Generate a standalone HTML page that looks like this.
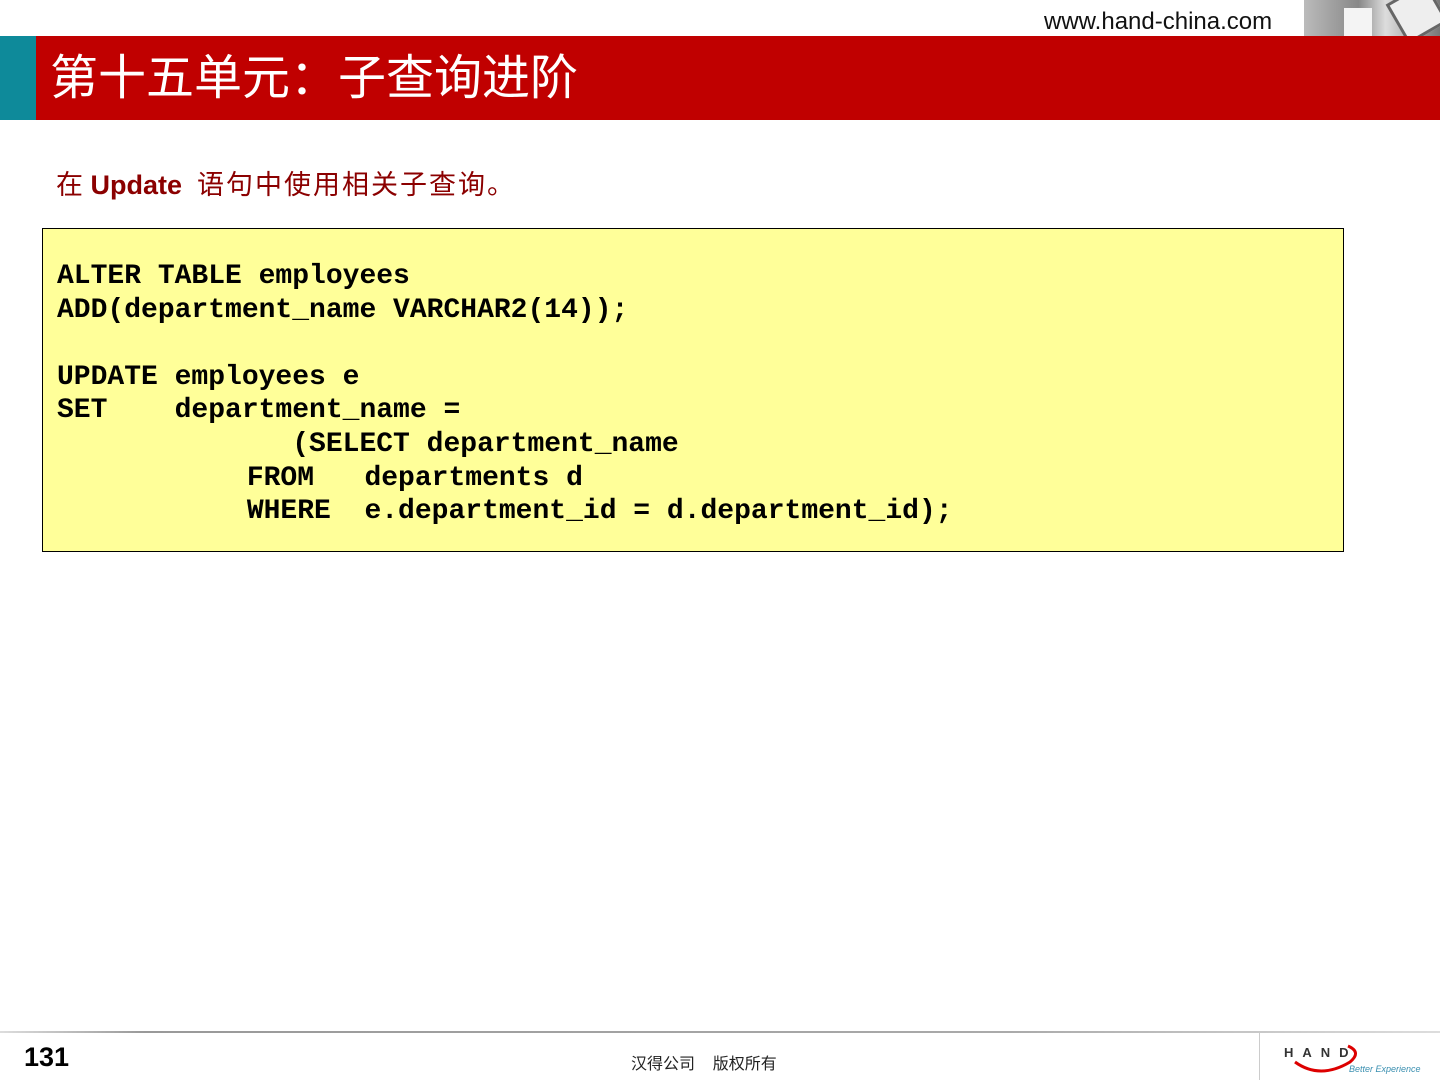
<!DOCTYPE html>
<html><head><meta charset="utf-8"><style>
body{margin:0;width:1440px;height:1080px;position:relative;background:#fff;overflow:hidden;font-family:"Liberation Sans","WenQuanYi Zen Hei",sans-serif}
.url{position:absolute;left:1044px;top:8px;font-size:24px;color:#111}
.photo{position:absolute;left:1304px;top:0;width:136px;height:36px;background:linear-gradient(90deg,#bbb,#888 40%,#ddd 60%,#777);overflow:hidden}
.bar{position:absolute;left:36px;top:36px;width:1404px;height:84px;background:#c00000}
.teal{position:absolute;left:0;top:36px;width:36px;height:84px;background:#0e8a9a}
.title{position:absolute;left:50px;top:38px;font-size:48px;color:#fff;font-family:"WenQuanYi Zen Hei",sans-serif;white-space:nowrap}
.sub{position:absolute;left:56px;top:163px;font-size:27px;color:#8b0000;font-family:"Liberation Sans","WenQuanYi Zen Hei",sans-serif;white-space:nowrap}
.sub .cj{letter-spacing:2px}
.code{position:absolute;left:42px;top:228px;width:1300px;height:322px;background:#ffff99;border:1.5px solid #000}
pre{margin:0;position:absolute;left:14px;top:31px;font-family:"Liberation Mono",monospace;font-weight:bold;font-size:28px;line-height:33.6px;color:#000}
.fline{position:absolute;left:0;top:1031px;width:1440px;height:2px;background:linear-gradient(90deg,#ddd,#999 10%,#aaa 70%,#ddd)}
.num{position:absolute;left:24px;top:1042px;font-size:27px;font-weight:bold}
.copy{position:absolute;left:631px;top:1050px;font-size:16px;color:#222;font-family:"WenQuanYi Zen Hei",sans-serif}
.vsep{position:absolute;left:1259px;top:1033px;width:1px;height:47px;background:#ccc}
</style></head><body>
<div class="url">www.hand-china.com</div>
<div class="photo"><div style="position:absolute;left:90px;top:-10px;width:40px;height:40px;background:#eee;transform:rotate(-30deg);border:3px solid #666"></div><div style="position:absolute;left:40px;top:8px;width:28px;height:28px;background:#f4f4f4"></div></div>
<div class="teal"></div><div class="bar"></div>
<div class="title">第十五单元：子查询进阶</div>
<div class="sub">在 <b style="font-family:'Liberation Sans',sans-serif">Update</b>&nbsp; <span class="cj">语句中使用相关子查询。</span></div>
<div class="code"><pre>ALTER TABLE employees
ADD(department_name VARCHAR2(14));

UPDATE employees e
SET    department_name = 
              (SELECT department_name
<span style="margin-left:5px">           FROM   departments d</span>
<span style="margin-left:5px">           WHERE  e.department_id = d.department_id);</span></pre></div>
<div class="fline"></div>
<div class="num">131</div>
<div class="copy">汉得公司&nbsp;&nbsp;&nbsp; 版权所有</div>
<div class="vsep"></div>
<div style="position:absolute;left:1284px;top:1045px;font-size:13px;font-weight:bold;letter-spacing:9px;color:#333">HAND</div>
<svg style="position:absolute;left:1290px;top:1040px" width="80" height="36"><path d="M5 22 Q30 40 60 22 Q72 12 58 6" fill="none" stroke="#d00" stroke-width="3"/></svg>
<div style="position:absolute;left:1349px;top:1064px;font-size:9px;font-style:italic;color:#3a8fb0">Better Experience</div>
</body></html>
